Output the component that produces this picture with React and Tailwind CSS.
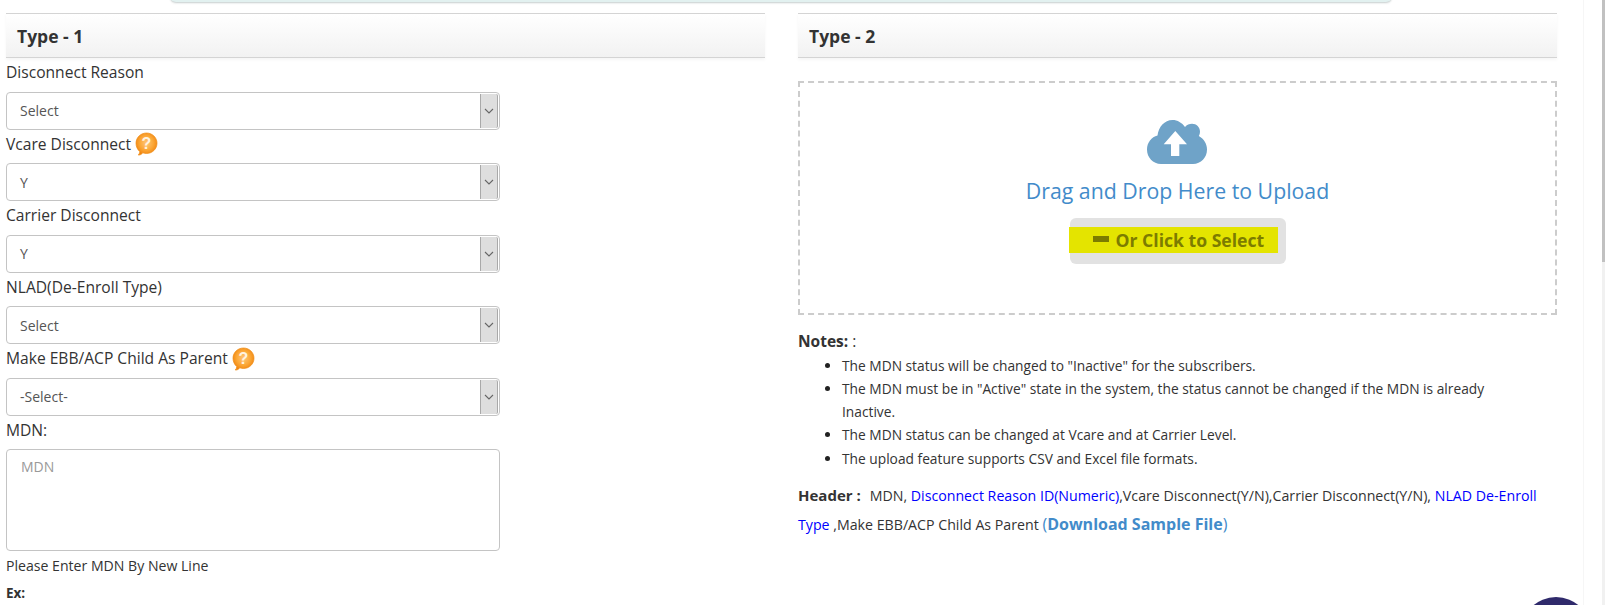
import React from 'react';

const HelpIcon = () => (
  <svg width="23" height="24" viewBox="0 0 23 24" className="ml-[4px] shrink-0">
    <defs>
      <radialGradient id="helpFill" cx="50%" cy="45%" r="60%">
        <stop offset="0%" stopColor="#ffc67a" />
        <stop offset="55%" stopColor="#fba736" />
        <stop offset="100%" stopColor="#ee7d08" />
      </radialGradient>
    </defs>
    <path d="M11.500 1C17.300 1 22 5.500 22 11.200s-4.700 10.300-10.500 10.300c-1.300 0-2.600-.2-3.700-.7C6.600 22.400 5 23.200 3.200 23c1-.9 1.500-2 1.500-3.500C2.500 17.600 1 14.600 1 11.200 1 5.500 5.700 1 11.500 1z" fill="url(#helpFill)" stroke="#ef8c14" strokeWidth="0.7" />
    <text x="11.500" y="17" textAnchor="middle" fontSize="16" fontFamily="Liberation Sans, sans-serif" fontWeight="700" fill="#fff3e0">?</text>
  </svg>
);

const SelectBox = ({ value }) => (
  <div className="h-[38px] w-[494px] flex items-stretch rounded-[4px] border border-[#c4c4c4] bg-white p-px pl-0">
    <div className="flex-1 flex items-center pl-[13px] text-[14px] text-[#555]">{value}</div>
    <div className="w-[18px] flex items-center justify-center bg-[#dedede] border-x border-[#a9a9a9] rounded-r-[2px]">
      <svg width="10" height="6" viewBox="0 0 10 6" fill="none" stroke="#666" strokeWidth="1.1">
        <path d="M1 1l4 4 4-4" />
      </svg>
    </div>
  </div>
);

const SectionHead = ({ title }) => (
  <div className="h-[45px] flex items-center pl-[11px] pt-[1px] border-y border-t-[#d4d4d4] border-b-[#d4d4d4] bg-gradient-to-b from-white to-[#f2f2f2] shadow-[0_2px_3px_rgba(0,0,0,0.04)] text-[17.5px] font-bold text-[#333]">
    {title}
  </div>
);

const FieldLabel = ({ children, help }) => (
  <div className="h-[33.5px] pb-[4px] flex items-center text-[15.6px] text-[#333]">
    {children}
    {help && <HelpIcon />}
  </div>
);

const App = () => {
  return (
    <div className="h-[605px] w-[1605px] overflow-hidden relative bg-white font-['Open_Sans',sans-serif] text-[#333]">
      {/* Panel cut off at the top */}
      <div className="absolute top-[-20px] left-[170px] w-[1222px] h-[22px] rounded-b-[6px] bg-[#e2f1f0] shadow-[0_1px_2px_rgba(90,110,110,0.35)]"></div>

      <div className="flex pt-[13px] pl-[6px] w-[1584px] h-full border-r border-[#f6f6f6]">
        {/* Type 1 */}
        <div className="w-[759px]">
          <SectionHead title="Type - 1" />
          <FieldLabel>Disconnect Reason</FieldLabel>
          <SelectBox value="Select" />
          <FieldLabel help>Vcare Disconnect</FieldLabel>
          <SelectBox value="Y" />
          <FieldLabel>Carrier Disconnect</FieldLabel>
          <SelectBox value="Y" />
          <FieldLabel>NLAD(De-Enroll Type)</FieldLabel>
          <SelectBox value="Select" />
          <FieldLabel help>Make EBB/ACP Child As Parent</FieldLabel>
          <SelectBox value="-Select-" />
          <FieldLabel>MDN:</FieldLabel>
          <div className="h-[102px] w-[494px] rounded-[4px] border border-[#c4c4c4] bg-white pt-[6px] pl-[14px] text-[14px] text-[#999]">MDN</div>
          <div className="mt-[4px] text-[14.1px] leading-[22px]">Please Enter MDN By New Line</div>
          <div className="mt-[7px] text-[13.5px] font-bold leading-[18px]">Ex:</div>
        </div>

        {/* Type 2 */}
        <div className="w-[759px] ml-[33px]">
          <SectionHead title="Type - 2" />
          <div className="mt-[23px] h-[234px] border-2 border-dashed border-[#cccccc] flex flex-col items-center pt-[37px]">
            <svg width="60" height="44" viewBox="0 0 60 44" className="ml-[-2px]">
              <path d="M14 44C6 44 0 37.500 0 29.500 0 22.500 4.500 17 10.500 15.500 11.500 7 17.500 0 25.500 0c5 0 9.500 2.700 12.500 7 1.800-2 4.300-3.200 7-3.200 4.500 0 8 3.500 8 8 0 1.500-.4 3-1.200 4.300C57 19 60 24 60 29.500 60 37.500 54 44 46 44z" fill="#6fa3c8" />
              <path d="M28.300 11L16.700 24.300H24V36h8.300V24.300H40z" fill="#fff" />
            </svg>
            <div className="mt-[11px] text-[21.3px] leading-[32px] text-[#428bca]">Drag and Drop Here to Upload</div>
            <div className="mt-[11px] h-[46px] w-[216px] rounded-[6px] bg-[#e2e2e2] flex items-center">
              <div className="ml-[-1px] mb-[2px] h-[26px] w-[209px] bg-[#e4e400] flex items-center pl-[24px] text-[17.6px] font-bold text-[#7c7c00]">
                <span className="w-[16px] h-[6px] bg-[#7c7c00] mr-[7px] mb-[3px]"></span>
                Or Click to Select
              </div>
            </div>
          </div>

          <div className="mt-[12.500px] text-[15.5px] font-bold leading-[26px]">Notes: <span className="font-normal">:</span></div>
          <ul className="list-disc pl-[44px] pr-[40px] text-[13.75px] leading-[23.3px]">
            <li className="marker:text-[#222]">The MDN status will be changed to "Inactive" for the subscribers.</li>
            <li className="marker:text-[#222]">The MDN must be in "Active" state in the system, the status cannot be changed if the MDN is already Inactive.</li>
            <li className="marker:text-[#222]">The MDN status can be changed at Vcare and at Carrier Level.</li>
            <li className="marker:text-[#222]">The upload feature supports CSV and Excel file formats.</li>
          </ul>
          <div className="mt-[11px] text-[14.2px] leading-[28px]">
            <span className="text-[15px] font-bold mr-[5px]">Header : </span>
            MDN, <span className="text-[#0000ff]">Disconnect Reason ID(Numeric)</span>,Vcare Disconnect(Y/N),Carrier Disconnect(Y/N), <span className="text-[#0000ff]">NLAD De-Enroll Type</span> ,Make EBB/ACP Child As Parent{' '}
            <span className="text-[16px] text-[#428bca]">(<span className="font-bold">Download Sample File</span>)</span>
          </div>
        </div>
      </div>

      {/* Chat bubble, cut off at the bottom */}
      <div className="absolute left-[1521px] top-[597px] w-[70px] h-[70px] rounded-full bg-[#2f2a6b]"></div>

      {/* Scrollbar */}
      <div className="absolute top-0 right-0 w-[3px] h-[605px] bg-[#f1f1f1]">
        <div className="h-[262px] bg-[#c1c1c1]"></div>
      </div>
    </div>
  );
};

export default App;
